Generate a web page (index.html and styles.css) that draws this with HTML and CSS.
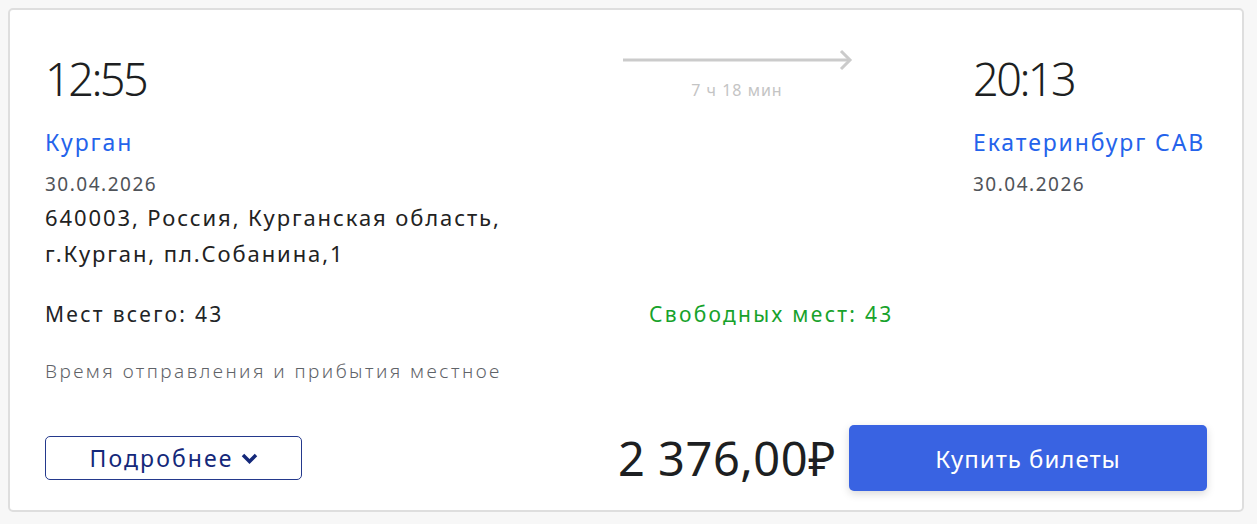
FILE: index.html
```html
<!DOCTYPE html>
<html lang="ru">
<head>
<meta charset="utf-8">
<title>Рейс</title>
<link rel="stylesheet" href="styles.css">
</head>
<body>
<div class="card">
  <div class="route">
    <div class="point">
      <div class="time">12:55</div>
      <div class="city">Курган</div>
      <div class="date">30.04.2026</div>
      <div class="address">640003, Россия, Курганская область,<br>г.Курган, пл.Собанина,1</div>
    </div>
    <div class="travel">
      <svg class="arrow" width="230" height="22" viewBox="0 0 230 22">
        <line x1="0" y1="11" x2="226" y2="11" stroke="#cbcbcb" stroke-width="3"/>
        <polyline points="218,2 227,11 218,20" fill="none" stroke="#cbcbcb" stroke-width="3"/>
      </svg>
      <div class="duration">7 ч 18 мин</div>
    </div>
    <div class="point">
      <div class="time">20:13</div>
      <div class="city">Екатеринбург САВ</div>
      <div class="date">30.04.2026</div>
    </div>
  </div>
  <div class="seats">
    <span class="total">Мест всего: 43</span>
    <span class="free">Свободных мест: 43</span>
  </div>
  <div class="note">Время отправления и прибытия местное</div>
  <div class="footer">
    <button class="more">Подробнее
      <svg class="chev" width="17" height="11" viewBox="0 0 17 11"><polyline points="2,2 8.5,8.5 15,2" fill="none" stroke="#14287a" stroke-width="3.5"/></svg>
    </button>
    <div class="buy-group">
      <span class="price">2 376,00₽</span>
      <button class="buy">Купить билеты</button>
    </div>
  </div>
</div>
</body>
</html>
```
FILE: styles.css
```css
html, body {
  margin: 0;
  padding: 0;
  background: #f7f7f7;
}
body {
  padding: 8px;
  font-family: "Noto Sans", "Open Sans", sans-serif;
  color: #222427;
}
.card {
  box-sizing: border-box;
  width: 1236px;
  height: 504px;
  background: #fff;
  border: 2px solid #dedede;
  border-radius: 5px;
  padding: 39px 35px 0 35px;
}
.route {
  display: grid;
  grid-template-columns: 578px 350px 1fr;
}
.time {
  font-size: 45px;
  line-height: 60px;
  font-weight: 300;
  letter-spacing: -2.5px;
  color: #1d1f22;
}
.city {
  margin-top: 18px;
  font-size: 23px;
  line-height: 30px;
  letter-spacing: 1.9px;
  color: #2463eb;
}
.date {
  margin-top: 15px;
  font-size: 19px;
  line-height: 24px;
  letter-spacing: 1.5px;
  color: #4f5359;
}
.address {
  margin-top: 3px;
  font-size: 22px;
  line-height: 36px;
  letter-spacing: 1.9px;
  color: #222;
}
.travel {
  display: flex;
  flex-direction: column;
  align-items: flex-start;
}
.arrow { display: block; }
.duration {
  width: 228px;
  text-align: center;
  font-size: 16px;
  line-height: 20px;
  letter-spacing: 1px;
  margin-top: 9px;
  color: #c4c4c4;
}
.seats {
  display: grid;
  grid-template-columns: 604px 1fr;
  margin-top: 29px;
  font-size: 21px;
  line-height: 28px;
  letter-spacing: 2.3px;
}
.free { color: #17a22b; }
.note {
  margin-top: 31px;
  font-size: 19px;
  line-height: 24px;
  letter-spacing: 2.45px;
  font-weight: 300;
  color: #5f6368;
}
.footer {
  display: flex;
  justify-content: space-between;
  align-items: center;
  margin-top: 42px;
}
.more {
  box-sizing: border-box;
  width: 257px;
  height: 44px;
  background: #fff;
  border: 1px solid #24398c;
  border-radius: 5px;
  font-family: inherit;
  font-size: 23px;
  letter-spacing: 2.1px;
  color: #14287a;
  display: flex;
  align-items: center;
  justify-content: center;
  gap: 7px;
  padding: 0;
}
.buy-group {
  display: flex;
  align-items: center;
  gap: 13px;
}
.price {
  font-size: 47px;
  letter-spacing: 0.5px;
  color: #1d1f22;
}
.buy {
  width: 358px;
  height: 66px;
  border: none;
  border-radius: 5px;
  background: #3963e2;
  color: #fff;
  font-family: inherit;
  font-size: 24px;
  letter-spacing: 1px;
  box-shadow: 0 3px 8px rgba(0,0,0,0.15);
}
```
